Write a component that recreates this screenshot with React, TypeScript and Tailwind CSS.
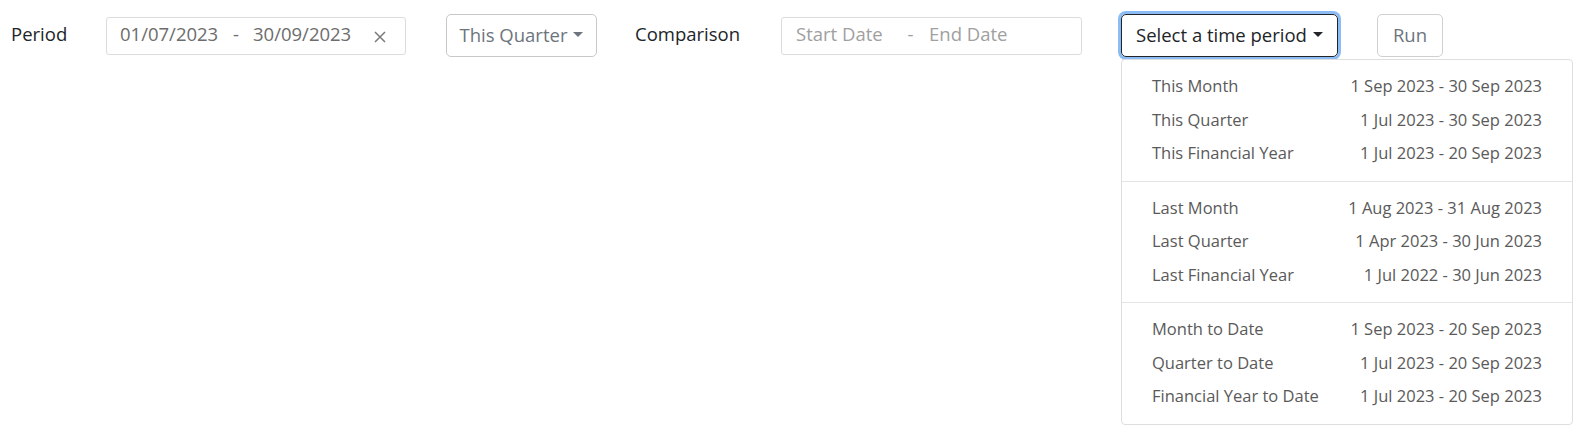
import React from "react";

const groups: [string, string][][] = [
  [
    ["This Month", "1 Sep 2023 - 30 Sep 2023"],
    ["This Quarter", "1 Jul 2023 - 30 Sep 2023"],
    ["This Financial Year", "1 Jul 2023 - 20 Sep 2023"],
  ],
  [
    ["Last Month", "1 Aug 2023 - 31 Aug 2023"],
    ["Last Quarter", "1 Apr 2023 - 30 Jun 2023"],
    ["Last Financial Year", "1 Jul 2022 - 30 Jun 2023"],
  ],
  [
    ["Month to Date", "1 Sep 2023 - 20 Sep 2023"],
    ["Quarter to Date", "1 Jul 2023 - 20 Sep 2023"],
    ["Financial Year to Date", "1 Jul 2023 - 20 Sep 2023"],
  ],
];

function Caret({ color }: { color: string }) {
  return (
    <span
      className="ml-[6px] inline-block h-0 w-0 border-x-[5px] border-t-[5px] border-x-transparent align-[4px]"
      style={{ borderTopColor: color }}
    />
  );
}

export default function App() {
  return (
    <div
      className="relative h-[435px] w-full bg-white"
      style={{ fontFamily: '"Open Sans", "Liberation Sans", sans-serif' }}
    >
      <div className="flex items-center pt-[14px] pl-[11px]">
        <div className="w-[95px] pb-[4px] text-[18.5px] text-[#212529]">Period</div>
        <div className="flex h-[38px] w-[300px] items-center rounded-[3px] border border-[#dcdcdc] pb-[3px] pl-[13px] text-[18.5px] text-[#6c6c6c]">
          <span className="w-[99px] whitespace-nowrap">01/07/2023</span>
          <span className="w-[34px] text-center">-</span>
          <span className="w-[104px] whitespace-nowrap">30/09/2023</span>
          <svg className="ml-[17px] mt-[5px]" width="12" height="12" viewBox="0 0 12 12">
            <path d="M1 1L11 11M11 1L1 11" stroke="#7a7a7a" strokeWidth="1.5" />
          </svg>
        </div>
        <div className="ml-[40px] flex h-[43px] w-[151px] items-center justify-center whitespace-nowrap rounded-[5px] border border-[#c8c8c8] pb-[2px] text-[18.5px] text-[#6c757d]">
          This Quarter
          <Caret color="#6c757d" />
        </div>
        <div className="ml-[38px] w-[146px] pb-[4px] text-[18.5px] text-[#212529]">Comparison</div>
        <div className="flex h-[38px] w-[301px] items-center rounded-[3px] border border-[#dcdcdc] pb-[3px] pl-[14px] text-[18.5px] text-[#a0a0a0]">
          <span className="w-[96px] whitespace-nowrap">Start Date</span>
          <span className="w-[37px] text-center">-</span>
          <span className="whitespace-nowrap">End Date</span>
        </div>
        <div className="relative ml-[39px]">
          <div className="flex h-[43px] w-[217px] items-center justify-center whitespace-nowrap rounded-[5px] border border-[#212529] pb-[2px] text-[18.5px] text-[#212529] shadow-[0_0_0_3px_#8cbcf5]">
            Select a time period
            <Caret color="#212529" />
          </div>
          <div className="absolute left-0 top-[45px] z-10 w-[452px] rounded-[4px] border border-[#dedede] bg-white text-[16.5px] text-[#5a5a5a]">
            {groups.map((g, gi) => (
              <div
                key={gi}
                className={`py-[10px] ${gi > 0 ? "border-t border-[#e5e5e5]" : ""}`}
              >
                {g.map(([l, r]) => (
                  <div
                    key={l}
                    className="flex h-[33.5px] items-center justify-between whitespace-nowrap px-[30px]"
                  >
                    <span>{l}</span>
                    <span>{r}</span>
                  </div>
                ))}
              </div>
            ))}
          </div>
        </div>
        <div className="ml-[39px] flex h-[43px] w-[66px] items-center justify-center rounded-[5px] border border-[#d0d0d0] pb-[2px] text-[18.5px] text-[#6c757d]">
          Run
        </div>
      </div>
    </div>
  );
}
